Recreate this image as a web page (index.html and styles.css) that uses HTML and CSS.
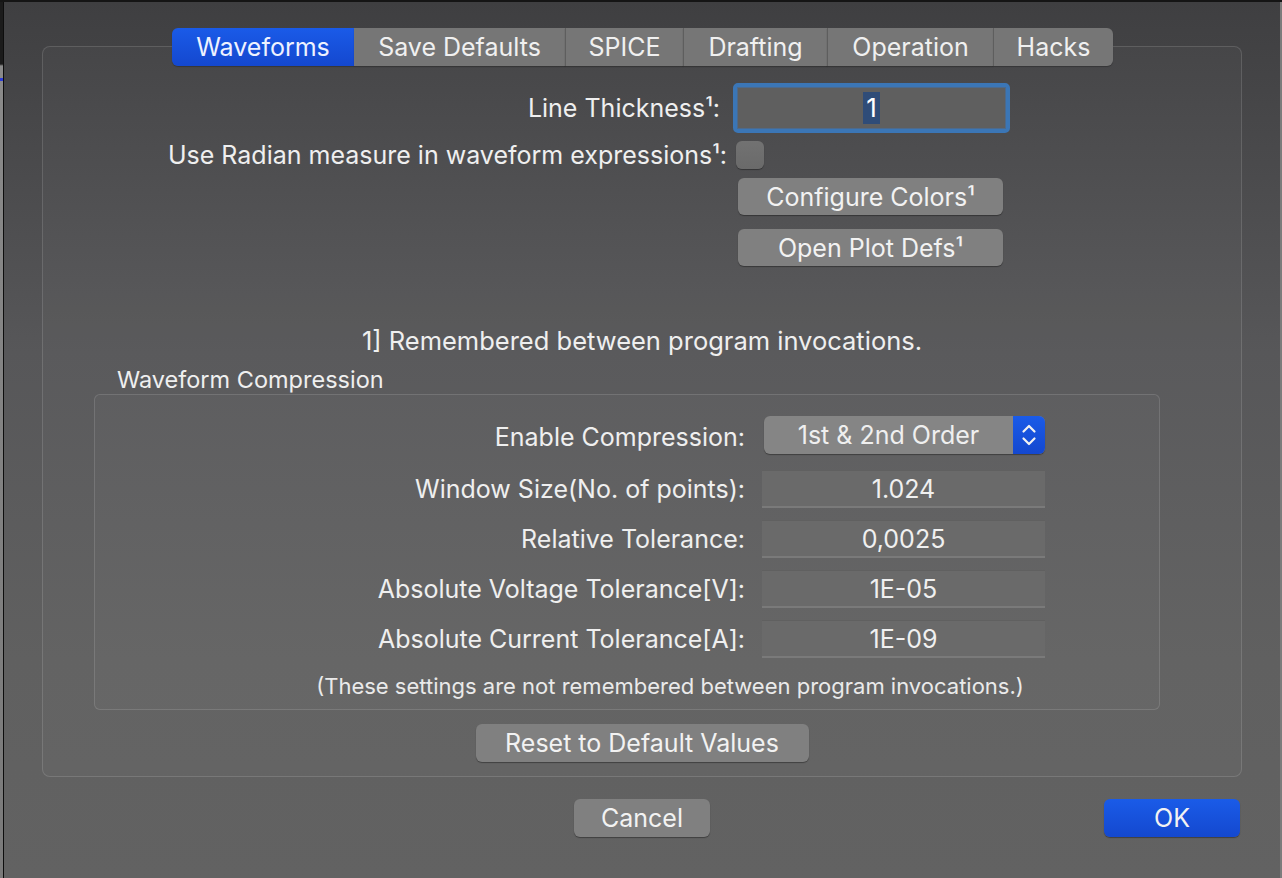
FILE: index.html
```html
<!DOCTYPE html>
<html>
<head>
<meta charset="utf-8">
<link rel="stylesheet" href="styles.css">
</head>
<body>
<div class="screen">
  <div class="edge"><span class="edge-mark"></span></div>
  <div class="window">
    <div class="tabs">
      <div class="tab active">Waveforms</div>
      <div class="tab w-save">Save Defaults</div>
      <div class="tab w-spice">SPICE</div>
      <div class="tab w-draft">Drafting</div>
      <div class="tab w-op">Operation</div>
      <div class="tab w-hacks">Hacks</div>
    </div>
    <div class="tabbox">
      <div class="form">
        <div class="label">Line Thickness¹:</div>
        <div class="ctrl"><div class="focus-field"><span class="sel">1</span></div></div>
        <div class="label lbl-check">Use Radian measure in waveform expressions¹:</div>
        <div class="ctrl"><div class="checkbox"></div></div>
        <div class="label"></div>
        <div class="ctrl"><div class="btn wide">Configure Colors¹</div></div>
        <div class="label"></div>
        <div class="ctrl"><div class="btn wide second">Open Plot Defs¹</div></div>
      </div>
      <div class="remember">1] Remembered between program invocations.</div>
      <div class="group-title">Waveform Compression</div>
      <div class="group">
        <div class="gform">
          <div class="glabel">Enable Compression:</div>
          <div class="popup"><span class="popup-text">1st &amp; 2nd Order</span><span class="popup-arrows"><svg width="18" height="26" viewBox="0 0 18 26"><path d="M3.5 9.5 L9 4 L14.5 9.5" fill="none" stroke="#f2f2f2" stroke-width="2.2" stroke-linecap="round" stroke-linejoin="round"/><path d="M3.5 16.5 L9 22 L14.5 16.5" fill="none" stroke="#f2f2f2" stroke-width="2.2" stroke-linecap="round" stroke-linejoin="round"/></svg></span></div>
          <div class="glabel">Window Size(No. of points):</div>
          <div class="field">1.024</div>
          <div class="glabel">Relative Tolerance:</div>
          <div class="field">0,0025</div>
          <div class="glabel">Absolute Voltage Tolerance[V]:</div>
          <div class="field">1E-05</div>
          <div class="glabel">Absolute Current Tolerance[A]:</div>
          <div class="field">1E-09</div>
        </div>
        <div class="gnote">(These settings are not remembered between program invocations.)</div>
      </div>
      <div class="reset-row"><div class="btn reset">Reset to Default Values</div></div>
    </div>
    <div class="bottom">
      <div></div>
      <div class="btn cancel">Cancel</div>
      <div class="btn ok">OK</div>
    </div>
  </div>
</div>
</body>
</html>
```
FILE: styles.css
```css
* { box-sizing: border-box; }
html, body { margin: 0; padding: 0; }
body {
  width: 1282px;
  height: 878px;
  overflow: hidden;
  background: #111;
  font-family: Inter, "Noto Sans", "Liberation Sans", sans-serif;
  color: #efefef;
}
.screen {
  display: flex;
  width: 1282px;
  height: 878px;
  border-top: 2px solid #151515;
}
.edge {
  flex: none;
  width: 4px;
  background: linear-gradient(#1b1b1b 0, #1b1b1b 62px, #8a8a8a 64px, #7a7a7a 100%);
  border-right: 1px solid #0d0d0d;
  position: relative;
}
.edge-mark {
  position: absolute;
  left: 0;
  top: 76px;
  width: 3px;
  height: 3px;
  background: #2a3ad8;
}
.window {
  flex: 1;
  display: flex;
  flex-direction: column;
  background: linear-gradient(#3f3f41 0%, #575759 40%, #606060 75%, #626262 100%);
  border-right: 2px solid #7c7c7c;
  padding-top: 26px;
}
.tabs {
  display: flex;
  margin-left: 168px;
  height: 38px;
  position: relative;
  z-index: 2;
}
.tab {
  height: 38px;
  display: flex;
  align-items: center;
  justify-content: center;
  background: #767676;
  border-left: 1px solid #5e5e5e;
  font-size: 25px;
  color: #f0f0f0;
  box-shadow: 0 1px 1px rgba(0,0,0,0.25);
}
.tab.active {
  width: 182px;
  background: linear-gradient(#1a5be8, #1448cf);
  border-radius: 6px 0 0 6px;
  border-left: none;
  color: #eef2ff;
}
.w-save { width: 211px; border-left: none; }
.w-spice { width: 118px; }
.w-draft { width: 144px; }
.w-op { width: 166px; }
.w-hacks { width: 120px; border-radius: 0 6px 6px 0; }
.tabbox {
  margin: -20px 38px 0 38px;
  height: 731px;
  border: 1.5px solid rgba(255,255,255,0.13);
  border-radius: 8px;
  background: rgba(255,255,255,0.025);
  padding-top: 36px;
  display: flex;
  flex-direction: column;
}
.form {
  display: grid;
  grid-template-columns: 684px 1fr;
  align-items: center;
}
.label {
  text-align: right;
  font-size: 25px;
  padding-right: 7px;
  color: #efefef;
}
.ctrl { display: flex; align-items: center; }
.focus-field {
  width: 277px;
  height: 50px;
  margin-left: 6px;
  border: 4px solid #3b76b6;
  border-radius: 5px;
  background: #5f5f5f;
  display: flex;
  align-items: center;
  justify-content: center;
  box-shadow: inset 0 0 0 1px #4d6a8c;
}
.sel {
  background: #2f4c78;
  color: #fff;
  font-size: 26px;
  line-height: 32px;
  padding: 0 3px;
}
.lbl-check { margin-top: 7px; padding-right: 0; }
.checkbox {
  width: 28px;
  height: 28px;
  margin: 7px 0 0 9px;
  border-radius: 6px;
  background: linear-gradient(#727272, #6a6a6a);
  box-shadow: 0 1px 1px rgba(0,0,0,0.35);
}
.btn {
  display: flex;
  align-items: center;
  justify-content: center;
  height: 37px;
  border-radius: 6px;
  background: #808080;
  font-size: 25px;
  color: #f2f2f2;
  box-shadow: 0 1px 1px rgba(0,0,0,0.35);
}
.btn.wide { width: 265px; margin-left: 11px; margin-top: 8px; }
.btn.second { margin-top: 14px; }
.remember {
  text-align: center;
  font-size: 25.5px;
  margin-top: 59px;
}
.group-title {
  font-size: 23.5px;
  margin: 9px 0 0 74px;
}
.group {
  margin: 0 81px 0 51px;
  height: 316px;
  border: 1.5px solid rgba(255,255,255,0.13);
  border-radius: 6px;
  background: rgba(255,255,255,0.02);
  padding-top: 21px;
}
.gform {
  display: grid;
  grid-template-columns: 667px 283px;
  row-gap: 12px;
  align-items: center;
}
.glabel {
  text-align: right;
  font-size: 25px;
  padding-right: 17px;
}
.popup {
  width: 281px;
  height: 38px;
  margin-left: 2px;
  display: flex;
  border-radius: 6px;
  background: #858585;
  box-shadow: 0 1px 1px rgba(0,0,0,0.35);
  overflow: hidden;
  margin-bottom: 4px;
}
.popup-text {
  flex: 1;
  display: flex;
  align-items: center;
  justify-content: center;
  font-size: 25px;
}
.popup-arrows {
  width: 32px;
  display: flex;
  align-items: center;
  justify-content: center;
  background: linear-gradient(#1a5be8, #1448cf);
}
.field {
  height: 38px;
  display: flex;
  align-items: center;
  justify-content: center;
  background: #6a6a6a;
  border-top: 1px solid #606060;
  border-bottom: 2px solid #7a7a7a;
  font-size: 25px;
  color: #f0f0f0;
}
.gnote {
  text-align: center;
  font-size: 22px;
  margin-top: 15px;
  padding-left: 86px;
  color: #eaeaea;
}
.reset-row {
  display: flex;
  justify-content: center;
  margin-top: 14px;
}
.btn.reset { width: 333px; height: 38px; }
.bottom {
  display: grid;
  grid-template-columns: 1fr auto 1fr;
  align-items: center;
  margin-top: 22px;
  padding: 0 40px;
}
.btn.cancel { width: 136px; height: 38px; }
.btn.ok {
  width: 136px;
  height: 38px;
  justify-self: end;
  background: linear-gradient(#1a5be8, #1448cf);
}
```
